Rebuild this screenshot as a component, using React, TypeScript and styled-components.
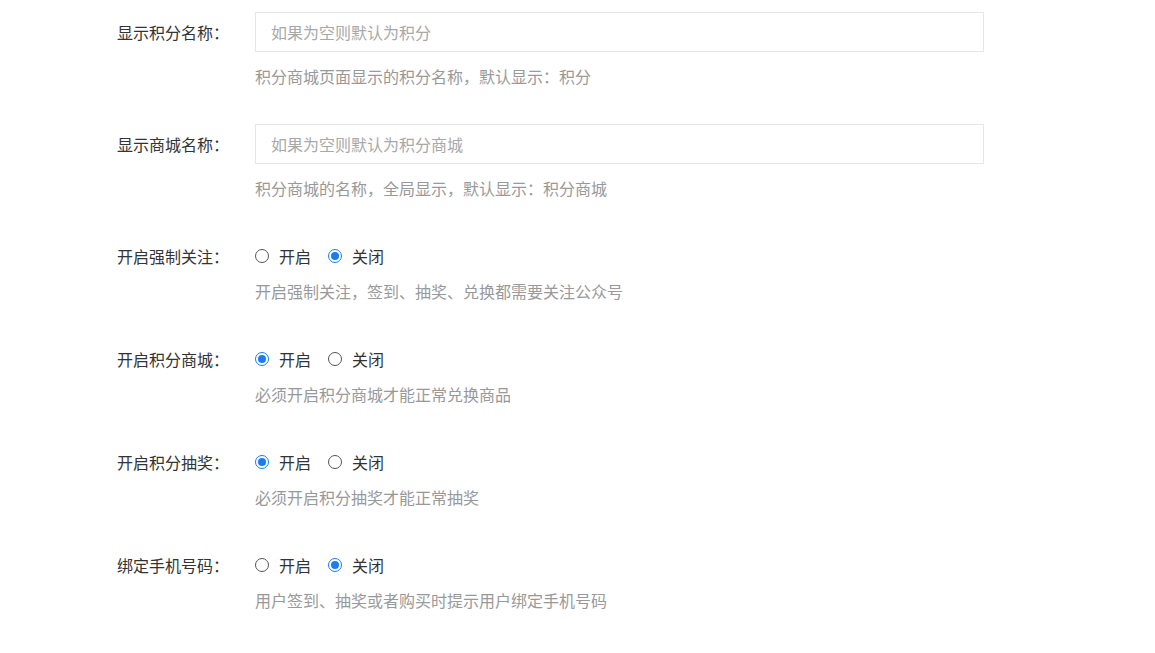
import React from "react";
import styled, { createGlobalStyle } from "styled-components";

const Global = createGlobalStyle`
  body { margin: 0; background: #fff; font-family: "Microsoft YaHei", "Noto Sans CJK SC", sans-serif; }
`;

const Form = styled.div`
  padding-top: 12px;
  display: flex;
  flex-direction: column;
`;

const Item = styled.div<{ $gap: number }>`
  display: grid;
  grid-template-columns: 229px 729px;
  column-gap: 26px;
  margin-bottom: ${(p) => p.$gap}px;
`;

const Label = styled.div<{ $h: number }>`
  text-align: right;
  font-size: 16px;
  color: #333;
  height: ${(p) => p.$h}px;
  line-height: ${(p) => p.$h}px;
  white-space: nowrap;
`;

const Field = styled.div`
  display: flex;
  flex-direction: column;
`;

const Input = styled.input`
  box-sizing: border-box;
  width: 729px;
  height: 40px;
  border: 1px solid #e6e6e6;
  padding: 0 15px;
  font-size: 16px;
  font-family: inherit;
  outline: none;
  &::placeholder { color: #a8a8a8; }
`;

const Help = styled.div<{ $mt: number }>`
  margin-top: ${(p) => p.$mt}px;
  font-size: 16px;
  line-height: 24px;
  color: #999;
`;

const Radios = styled.div`
  display: flex;
  align-items: center;
  height: 24px;
  gap: 17px;
`;

const Opt = styled.label`
  display: flex;
  align-items: center;
  gap: 10px;
  font-size: 16px;
  color: #333;
`;

const Circle = styled.span<{ $on: boolean }>`
  box-sizing: border-box;
  width: 14px;
  height: 14px;
  border-radius: 50%;
  border: 1px solid ${(p) => (p.$on ? "#1a7cf0" : "#555")};
  display: flex;
  align-items: center;
  justify-content: center;
  &::after {
    content: "";
    width: 8px;
    height: 8px;
    border-radius: 50%;
    background: ${(p) => (p.$on ? "#1a7cf0" : "transparent")};
  }
`;

const inputs = [
  ["显示积分名称：", "如果为空则默认为积分", "积分商城页面显示的积分名称，默认显示：积分"],
  ["显示商城名称：", "如果为空则默认为积分商城", "积分商城的名称，全局显示，默认显示：积分商城"],
];
const radios: [string, boolean, string][] = [
  ["开启强制关注：", false, "开启强制关注，签到、抽奖、兑换都需要关注公众号"],
  ["开启积分商城：", true, "必须开启积分商城才能正常兑换商品"],
  ["开启积分抽奖：", true, "必须开启积分抽奖才能正常抽奖"],
  ["绑定手机号码：", false, "用户签到、抽奖或者购买时提示用户绑定手机号码"],
];

export default function App() {
  return (
    <>
      <Global />
      <Form>
        {inputs.map(([l, ph, h], i) => (
          <Item key={l} $gap={i === 0 ? 36 : 44}>
            <Label $h={40}>{l}</Label>
            <Field>
              <Input placeholder={ph} />
              <Help $mt={12}>{h}</Help>
            </Field>
          </Item>
        ))}
        {radios.map(([l, on, h]) => (
          <Item key={l} $gap={44}>
            <Label $h={24}>{l}</Label>
            <Field>
              <Radios>
                <Opt><Circle $on={on} />开启</Opt>
                <Opt><Circle $on={!on} />关闭</Opt>
              </Radios>
              <Help $mt={11}>{h}</Help>
            </Field>
          </Item>
        ))}
      </Form>
    </>
  );
}
